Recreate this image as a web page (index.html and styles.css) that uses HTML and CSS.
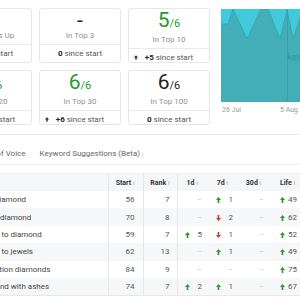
FILE: index.html
```html
<!DOCTYPE html>
<html lang="en">
<head>
<meta charset="UTF-8">
<title>Rank tracker</title>
<link rel="stylesheet" href="styles.css">
</head>
<body>
<main class="page">
    <section class="overview">
        <div class="cards">
            <div class="card">
                <div class="card-main"><span class="big">0</span><span class="label">Keywords Up</span></div>
                <div class="card-foot"><span></span><span><b>0</b> since start</span><span></span></div>
            </div>
            <div class="card">
                <div class="card-main"><span class="big">-</span><span class="label">In Top 3</span></div>
                <div class="card-foot"><span></span><span><b>0</b> since start</span><span></span></div>
            </div>
            <div class="card">
                <div class="card-main"><span class="big good">5<small>/6</small></span><span class="label">In Top 10</span></div>
                <div class="card-foot"><svg class="tick" viewBox="0 0 6 7"><path d="M3 0L6 3.5H4V7H2V3.5H0Z"/></svg><span><b>+5</b> since start</span><span></span></div>
            </div>
            <div class="card">
                <div class="card-main"><span class="big good">6<small>/6</small></span><span class="label">In Top 20</span></div>
                <div class="card-foot"><svg class="tick" viewBox="0 0 6 7"><path d="M3 0L6 3.5H4V7H2V3.5H0Z"/></svg><span><b>+6</b> since start</span><span></span></div>
            </div>
            <div class="card">
                <div class="card-main"><span class="big good">6<small>/6</small></span><span class="label">In Top 30</span></div>
                <div class="card-foot"><svg class="tick" viewBox="0 0 6 7"><path d="M3 0L6 3.5H4V7H2V3.5H0Z"/></svg><span><b>+6</b> since start</span><span></span></div>
            </div>
            <div class="card">
                <div class="card-main"><span class="big">6<small>/6</small></span><span class="label">In Top 100</span></div>
                <div class="card-foot"><span></span><span><b>0</b> since start</span><span></span></div>
            </div>
        </div>

        <div class="chart">
            <svg class="plot" width="120" height="93" viewBox="0 0 120 93">
                <rect width="120" height="93" fill="#40cadb"/>
                <polygon points="0,15 7,15 12,0 26,30 40,0 47,0 59,30 66,1 72,30 80,6 92,0 120,0 120,93 0,93" fill="#41aeb8"/>
                <polyline points="0,15 7,15 12,0 26,30 40,0 47,0 59,30 66,1 72,30 80,6 92,0" fill="none" stroke="#3ba4ae" stroke-width="1"/>
                <line x1="66.5" y1="0" x2="66.5" y2="93" stroke="#3c9fa9" stroke-width="1"/>
                <text x="66" y="51" class="series">keywords</text>
            </svg>
            <div class="axis"><span>26 Jul</span><span>5 Aug</span></div>
        </div>
    </section>

    <nav class="tabs">
        <a>Share of Voice</a>
        <a>Keyword Suggestions (Beta) <i>i</i></a>
    </nav>

    <table class="ranks">
        <colgroup>
            <col class="c-name"><col class="c-num"><col class="c-num2"><col class="c-d1"><col class="c-d7"><col class="c-d30"><col class="c-life">
        </colgroup>
        <thead>
            <tr><th class="name">Keyword</th><th class="num">Start <i>i</i></th><th class="num">Rank <i>i</i></th><th>1d <i>i</i></th><th>7d <i>i</i></th><th>30d <i>i</i></th><th>Life <i>i</i></th></tr>
        </thead>
        <tbody id="rows"></tbody>
    </table>
</main>
<script>
const rows=[
    ['ashes-to-diamond',56,7,0,1,0,49],
    ['cremation diamond',70,8,0,-2,0,62],
    ['turn ashes to diamond',59,7,5,-1,0,52],
    ['turn ashes to jewels',62,13,0,1,0,49],
    ['ash cremation diamonds',84,9,0,0,0,75],
    ['ring diamond with ashes',74,7,2,1,0,67]
];
const up='<svg class="arr up" viewBox="0 0 6 7"><path d="M3 0L6 3.5H4V7H2V3.5H0Z"/></svg>';
const down='<svg class="arr down" viewBox="0 0 6 7"><path d="M3 7L6 3.5H4V0H2V3.5H0Z"/></svg>';
function change(v){
    if(v===0)return '<td class="chg"><span class="none">–</span></td>';
    return '<td class="chg">'+(v>0?up:down)+'<span class="val">'+Math.abs(v)+'</span></td>';
}
let html='';
for(const r of rows){
    html+='<tr><td class="name">'+r[0]+'</td><td class="num">'+r[1]+'</td><td class="num">'+r[2]+'</td>'
        +change(r[3])+change(r[4])+change(r[5])+change(r[6])+'</tr>';
}
document.getElementById('rows').innerHTML=html;
</script>
</body>
</html>
```
FILE: styles.css
```css
body{
    margin:0;
    width:300px;
    height:300px;
    overflow:hidden;
    background:#fff;
    font-family:Roboto,"Liberation Sans",Arial,sans-serif;
    color:#444;
}
.page{
    margin-left:-50px;
    width:360px;
}
.overview{
    display:flex;
    gap:11px;
    padding-top:8px;
    padding-bottom:9px;
    border-bottom:1px solid #e6e8eb;
}
.cards{
    display:grid;
    grid-template-columns:repeat(3,82px);
    grid-auto-rows:55px;
    gap:7px;
}
.card{
    display:flex;
    flex-direction:column;
    box-sizing:border-box;
    border:1px solid #e3e6ea;
    border-radius:3px;
    text-align:center;
}
.card-main{
    display:flex;
    flex-direction:column;
    padding-bottom:3px;
}
.big{
    font-size:21px;
    line-height:22px;
    color:#222;
}
.big small{
    font-size:11px;
}
.big.good{color:#23992a;}
.label{
    font-size:8px;
    line-height:10px;
    color:#8a8f96;
}
.card-foot{
    flex:1;
    display:grid;
    grid-template-columns:1fr auto 1fr;
    align-items:center;
    border-top:1px solid #e8eaed;
    font-size:8px;
    line-height:17px;
    color:#555;
}
.card-foot b{color:#222;}
.tick{
    width:4px;
    height:5px;
    margin-left:5px;
    fill:#222;
}
.chart{
    flex:0 0 120px;
    margin-top:1px;
}
.plot{display:block;}
.series{
    font-family:Roboto,"Liberation Sans",Arial,sans-serif;
    font-size:9px;
    fill:#3893a0;
}
.axis{
    display:flex;
    gap:39px;
    padding-left:1px;
    height:16px;
    line-height:16px;
    font-size:7px;
    color:#999;
}
.tabs{
    display:flex;
    gap:14px;
    padding:14px 0 5px 24px;
    border-bottom:1px solid #eceef1;
    font-size:8px;
    line-height:10px;
    color:#666;
}
.tabs i,th i{
    font-style:normal;
    color:#bbb;
    font-size:6px;
}
.ranks{
    margin-top:8px;
    border-collapse:collapse;
    table-layout:fixed;
    width:352px;
    font-size:8px;
    color:#555;
    border-bottom:1px solid #e6e8eb;
}
.c-name{width:158px;}
.c-num{width:35px;}
.c-num2{width:34px;}
.c-d1{width:30px;}
.c-d7{width:31px;}
.c-d30{width:31px;}
.c-life{width:33px;}
.ranks th{
    height:17px;
    padding:0;
    background:#f5f6f8;
    font-size:7px;
    font-weight:bold;
    color:#333;
    text-align:center;
    border-top:1px solid #eceef1;
}
.ranks td{
    height:17.4px;
    padding:0;
    white-space:nowrap;
}
.ranks tbody tr:nth-child(even){background:#f6f7f9;}
.ranks .name{
    padding-left:12px;
    text-align:left;
    color:#444;
}
.ranks th.name{color:#333;}
.ranks .num{
    text-align:right;
    padding-right:8px;
    border-left:1px solid #e4e6ea;
}
.ranks .num + .num{padding-right:7px;}
.ranks tr > :nth-child(4){border-left:1px solid #e4e6ea;}
.ranks th:last-child{padding-left:4px;}
.chg{
    text-align:right;
    padding-right:5px !important;
}
.arr{
    width:5px;
    height:6px;
    vertical-align:-1px;
}
.arr.up{fill:#2a9a2a;}
.arr.down{fill:#d9352b;}
.val{
    display:inline-block;
    min-width:12px;
    text-align:right;
}
.none{color:#c8c8c8;}
```
